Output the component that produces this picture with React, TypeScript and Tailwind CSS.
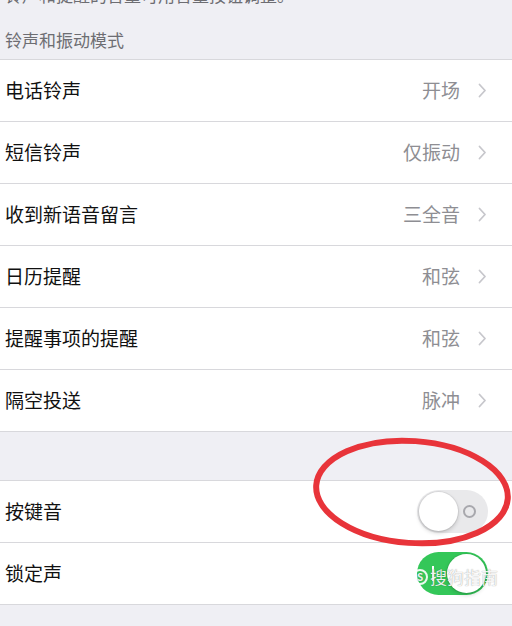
const font = { fontFamily: '"Noto Sans CJK SC", "Noto Sans", sans-serif' };

const ringtones = [
  { label: '电话铃声', value: '开场' },
  { label: '短信铃声', value: '仅振动' },
  { label: '收到新语音留言', value: '三全音' },
  { label: '日历提醒', value: '和弦' },
  { label: '提醒事项的提醒', value: '和弦' },
  { label: '隔空投送', value: '脉冲' },
];

function Chevron() {
  return (
    <svg width="9" height="15" viewBox="0 0 9 15" className="flex-none">
      <path d="M1.5 1.5 L7 7.5 L1.5 13.5" fill="none" stroke="#c7c7cc" strokeWidth="1.8" strokeLinecap="round" strokeLinejoin="round" />
    </svg>
  );
}

function Toggle({ on }: { on: boolean }) {
  return (
    <div
      className={`relative flex h-[43px] w-[71px] flex-none items-center rounded-full ${
        on ? 'bg-[#34c759] justify-end' : 'bg-[#e9e9eb] justify-start'
      }`}
    >
      {on ? (
        <span className="absolute left-[15px] top-[14px] h-[15px] w-[2px] bg-white" />
      ) : (
        <span className="absolute right-[12px] top-[15px] h-[13px] w-[13px] rounded-full border-2 border-[#a8a8ad]" />
      )}
      <span className="m-[2px] h-[39px] w-[39px] rounded-full bg-white shadow-[0_2px_4px_rgba(0,0,0,0.18),0_0_0_1px_rgba(0,0,0,0.06)]" />
    </div>
  );
}

export default function App() {
  return (
    <div className="relative h-[626px] w-[512px] overflow-hidden bg-[#efeff4]" style={font}>
      <div className="flex flex-col px-[5px] pb-[9px]">
        <p className="mt-[-15px] text-[17px] leading-[20px] text-[#6d6d72]">铃声和提醒的音量可用音量按钮调整。</p>
        <p className="mt-[25px] text-[17px] leading-[20px] text-[#6d6d72]">铃声和振动模式</p>
      </div>

      <div className="border-b border-[#d8d8dc] bg-white">
        {ringtones.map((r) => (
          <div key={r.label} className="flex h-[62px] items-center border-t border-[#d8d8dc] pl-[5px] pr-[25px]">
            <span className="flex-1 text-[19px] text-[#111]">{r.label}</span>
            <span className="mr-[18px] text-[19px] text-[#8e8e93]">{r.value}</span>
            <Chevron />
          </div>
        ))}
      </div>

      <div className="mt-[48px] border-b border-[#d8d8dc] bg-white">
        <div className="flex h-[62px] items-center border-t border-[#d8d8dc] pl-[5px] pr-[24px]">
          <span className="flex-1 text-[19px] text-[#111]">按键音</span>
          <Toggle on={false} />
        </div>
        <div className="flex h-[62px] items-center border-t border-[#d8d8dc] pl-[5px] pr-[24px]">
          <span className="flex-1 text-[19px] text-[#111]">锁定声</span>
          <Toggle on />
        </div>
      </div>

      {/* red annotation ring */}
      <svg className="pointer-events-none absolute left-[308px] top-[432px]" width="206" height="120" viewBox="0 0 206 120">
        <ellipse cx="104" cy="60" rx="96" ry="51" transform="rotate(4 104 60)" fill="none" stroke="#e8343a" strokeWidth="6" />
      </svg>

      {/* watermark */}
      <div className="pointer-events-none absolute left-[412px] top-[568px] flex items-center gap-[2px] text-white/90 [text-shadow:0_0_1px_rgba(0,0,0,0.45)]">
        <span className="flex h-[16px] w-[16px] items-center justify-center rounded-full border-2 border-white/90 text-[10px] font-bold leading-none">S</span>
        <span className="text-[17px] leading-none">搜狗指南</span>
      </div>
    </div>
  );
}
